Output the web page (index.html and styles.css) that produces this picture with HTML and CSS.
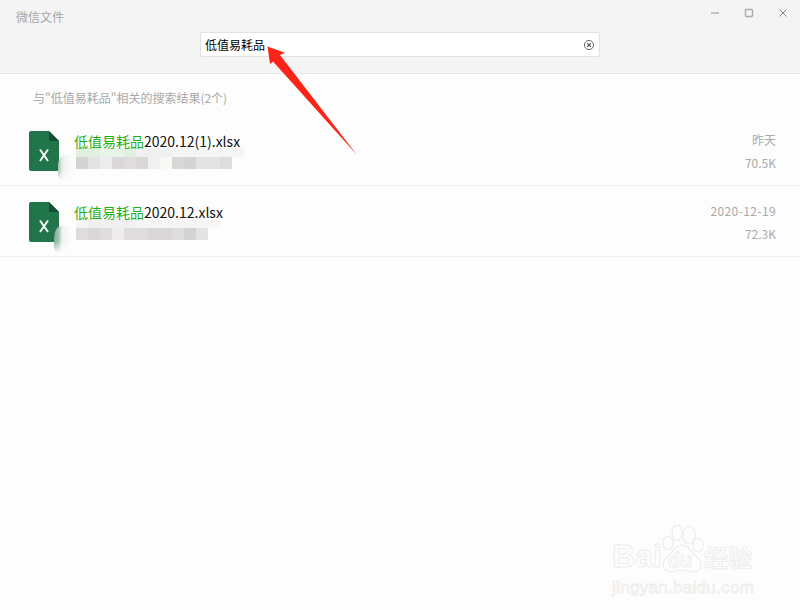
FILE: index.html
```html
<!DOCTYPE html>
<html lang="zh-CN">
<head>
  <meta charset="UTF-8" />
  <title>微信文件</title>
  <link rel="stylesheet" href="styles.css">
</head>
<body>
  <div class="window">
    <!-- Header -->
    <header class="header">
      <div class="title-bar">
        <span class="title">微信文件</span>
        <div class="win-buttons">
          <svg width="10" height="10" viewBox="0 0 10 10"><path d="M1 5h8" stroke="#bbb" stroke-width="1.6"/></svg>
          <svg width="10" height="10" viewBox="0 0 10 10"><rect x="1.5" y="1.5" width="7" height="7" rx="1" fill="none" stroke="#aaa" stroke-width="1.4"/></svg>
          <svg width="10" height="10" viewBox="0 0 10 10"><path d="M1.5 1.5l7 7M8.5 1.5l-7 7" stroke="#888" stroke-width="1"/></svg>
        </div>
      </div>
      <div class="search">
        <span>低值易耗品</span>
        <svg width="12" height="12" viewBox="0 0 12 12"><circle cx="6" cy="6" r="4.6" fill="none" stroke="#666" stroke-width="1"/><path d="M4.2 4.2l3.6 3.6M7.8 4.2l-3.6 3.6" stroke="#555" stroke-width="1.2"/></svg>
      </div>
    </header>

    <main class="results">
      <p class="summary">与"低值易耗品"相关的搜索结果(2个)</p>

      <div class="file-row">
        <svg class="file-icon" width="30" height="40" viewBox="0 0 30 40"><path d="M2 0h18l10 10v28a2 2 0 0 1-2 2H2a2 2 0 0 1-2-2V2a2 2 0 0 1 2-2z" fill="#21754a"/><path d="M20 0l10 10H20z" fill="#174f34"/><path d="M11 18.5l8 11.5M19 18.5l-8 11.5" stroke="#f4f8f5" stroke-width="2" fill="none"/></svg>
        <div class="smudge smudge-a"></div>
        <div class="file-main">
          <div class="file-name"><em>低值易耗品</em>2020.12(1).xlsx</div>
          <div class="mosaic tint">
            <i class="g1"></i><i class="g1"></i><i class="g2"></i><i class="g2"></i><i class="g1"></i><i class="s7"></i><i class="s7"></i><i class="s7"></i><i class="s8"></i><i class="s8"></i><i class="s8"></i><i class="s8"></i><i class="s8"></i><i class="s8"></i>
          </div>
          <div class="mosaic">
            <i class="s1"></i><i class="s4"></i><i class="s6"></i><i class="s2"></i><i class="s3"></i><i class="s2"></i><i class="s7"></i><i class="s9"></i><i class="s2"></i><i class="s1"></i><i class="s4"></i><i class="s4"></i><i class="s3"></i>
          </div>
        </div>
        <div class="file-meta">
          <span>昨天</span>
          <span>70.5K</span>
        </div>
      </div>

      <div class="file-row">
        <svg class="file-icon" width="30" height="40" viewBox="0 0 30 40"><path d="M2 0h18l10 10v28a2 2 0 0 1-2 2H2a2 2 0 0 1-2-2V2a2 2 0 0 1 2-2z" fill="#21754a"/><path d="M20 0l10 10H20z" fill="#174f34"/><path d="M11 18.5l8 11.5M19 18.5l-8 11.5" stroke="#f4f8f5" stroke-width="2" fill="none"/></svg>
        <div class="smudge smudge-b"></div>
        <div class="file-main">
          <div class="file-name"><em>低值易耗品</em>2020.12.xlsx</div>
          <div class="mosaic tint">
            <i class="s8"></i><i class="s7"></i><i class="s7"></i><i class="s7"></i><i class="s7"></i><i class="s8"></i><i class="s8"></i><i class="s8"></i><i class="s8"></i><i class="s8"></i><i class="s8"></i><i class="s9"></i>
          </div>
          <div class="mosaic">
            <i class="s3"></i><i class="s2"></i><i class="s3"></i><i class="s6"></i><i class="s3"></i><i class="s3"></i><i class="s2"></i><i class="s2"></i><i class="s3"></i><i class="s1"></i><i class="s4"></i>
          </div>
        </div>
        <div class="file-meta">
          <span class="date">2020-12-19</span>
          <span>72.3K</span>
        </div>
      </div>
    </main>

    <!-- Annotation arrow -->
    <svg class="arrow" width="110" height="125" viewBox="0 0 110 125"><path d="M7.5 6.5L25 12.7 20 15 97 115 13 21.5 10 24z" fill="#fc2418"/></svg>

    <!-- Watermark -->
    <div class="watermark">
      <svg class="paw" width="52" height="48" viewBox="0 0 52 48"><g fill="#fdfdfd" stroke="#ececec" stroke-width="1.2"><ellipse cx="8" cy="18" rx="5" ry="7"/><ellipse cx="17" cy="8" rx="5" ry="8"/><ellipse cx="29" cy="10" rx="6" ry="9"/><ellipse cx="38" cy="20" rx="5" ry="7"/><path d="M22 20c5 0 8 4 11 8 3 3 8 6 8 12 0 5-4 7-8 7-4 0-7-2-11-2s-7 2-11 2c-5 0-8-3-8-7 0-6 5-9 8-12 3-4 6-8 11-8z"/></g></svg>
      <div class="wm-logo"><span>Bai</span><span class="wm-du">du</span><span class="wm-cn">经验</span></div>
      <div class="wm-url">jingyan.baidu.com</div>
    </div>
  </div>
</body>
</html>
```

FILE: styles.css
```css
* {
  box-sizing: border-box;
}

html, body {
  margin: 0;
  padding: 0;
}

body {
  font-family: "Noto Sans CJK SC", "Noto Sans", sans-serif;
  background: #fdfdfd;
}

.window {
  position: relative;
  width: 800px;
  height: 610px;
  overflow: hidden;
}

.header {
  height: 74px;
  background: #f4f4f4;
  border-bottom: 1px solid #e6e6e6;
}

.title-bar {
  display: flex;
  justify-content: space-between;
  height: 32px;
  padding: 8px 12px 0 16px;
}

.title {
  font-size: 12px;
  line-height: 18px;
  color: #a6a6a6;
}

.win-buttons {
  display: flex;
  gap: 24px;
}

.search {
  display: flex;
  align-items: center;
  justify-content: space-between;
  width: 400px;
  height: 25px;
  margin-left: 200px;
  padding: 0 4px;
  background: #fff;
  border: 1px solid #e2e2e2;
  border-radius: 2px;
  font-size: 12px;
  color: #000;
}

.summary {
  margin: 0;
  padding: 15px 0 0 33px;
  height: 41px;
  font-size: 12px;
  line-height: 18px;
  color: #a9a9a9;
}

.file-row {
  position: relative;
  display: flex;
  height: 71px;
  padding: 16px 24px 0 29px;
  border-bottom: 1px solid #f0f0f0;
}

.file-icon {
  flex: none;
  margin-right: 15px;
}

.smudge {
  position: absolute;
  border-radius: 12px 60px 20px 16px / 20px 30px 20px 16px;
  filter: blur(.5px);
}

.smudge-a {
  left: 58px;
  top: 40px;
  width: 188px;
  height: 28px;
  background:
    linear-gradient(180deg, rgba(253, 253, 253, 0) 55%, #fdfdfd 95%),
    linear-gradient(90deg, #9dc0ad 0, #e4eee8 4px, #f4f7f5 8px, #fdfdfd 18px);
}

.smudge-b {
  left: 54px;
  top: 40px;
  width: 178px;
  height: 30px;
  background:
    linear-gradient(180deg, rgba(253, 253, 253, 0) 50%, #fdfdfd 90%),
    linear-gradient(90deg, #7faa93 0, #a8c6b6 5px, #eef3f0 8px, #fdfdfd 18px);
}

.file-main {
  position: relative;
  flex: 1;
}

.file-name {
  position: relative;
  z-index: 1;
  font-size: 14px;
  line-height: 20px;
  color: #111;
}

.file-name em {
  font-style: normal;
  color: #1fae1c;
}

.mosaic {
  display: flex;
  margin-left: 2px;
  height: 12px;
}

.mosaic.tint {
  height: 9px;
  margin-top: -3px;
}

.mosaic i {
  width: 12px;
}

.g1 { background: #e0f0de; }
.g2 { background: #e8f3ea; }
.s1 { background: #d3d3d4; }
.s2 { background: #d9d8d7; }
.s3 { background: #dedcdc; }
.s4 { background: #e3e3e5; }
.s6 { background: #efedeb; }
.s7 { background: #f0f0f1; }
.s8 { background: #f5f5f5; }
.s9 { background: #f8f8f6; }

.file-meta {
  display: flex;
  flex-direction: column;
  align-items: flex-end;
  gap: 5px;
  font-size: 12px;
  line-height: 18px;
  color: #a9a9a9;
}

.date {
  letter-spacing: .4px;
}

.arrow {
  position: absolute;
  left: 260px;
  top: 40px;
}

.watermark {
  position: absolute;
  left: 612px;
  top: 524px;
  width: 150px;
  color: transparent;
  -webkit-text-stroke: .8px #ececec;
}

.paw {
  position: absolute;
  left: 48px;
  top: 1px;
}

.wm-logo {
  position: relative;
  display: flex;
  align-items: baseline;
  margin-top: 15px;
  font-family: "Liberation Sans", sans-serif;
  font-size: 32px;
  font-weight: 700;
  line-height: 34px;
}

.wm-du {
  margin-left: 6px;
  font-size: 20px;
}

.wm-cn {
  margin-left: 12px;
  font-family: "Noto Sans CJK SC", sans-serif;
  font-size: 24px;
}

.wm-url {
  font-family: "Liberation Sans", sans-serif;
  font-size: 17px;
  line-height: 22px;
  letter-spacing: .3px;
}
```
